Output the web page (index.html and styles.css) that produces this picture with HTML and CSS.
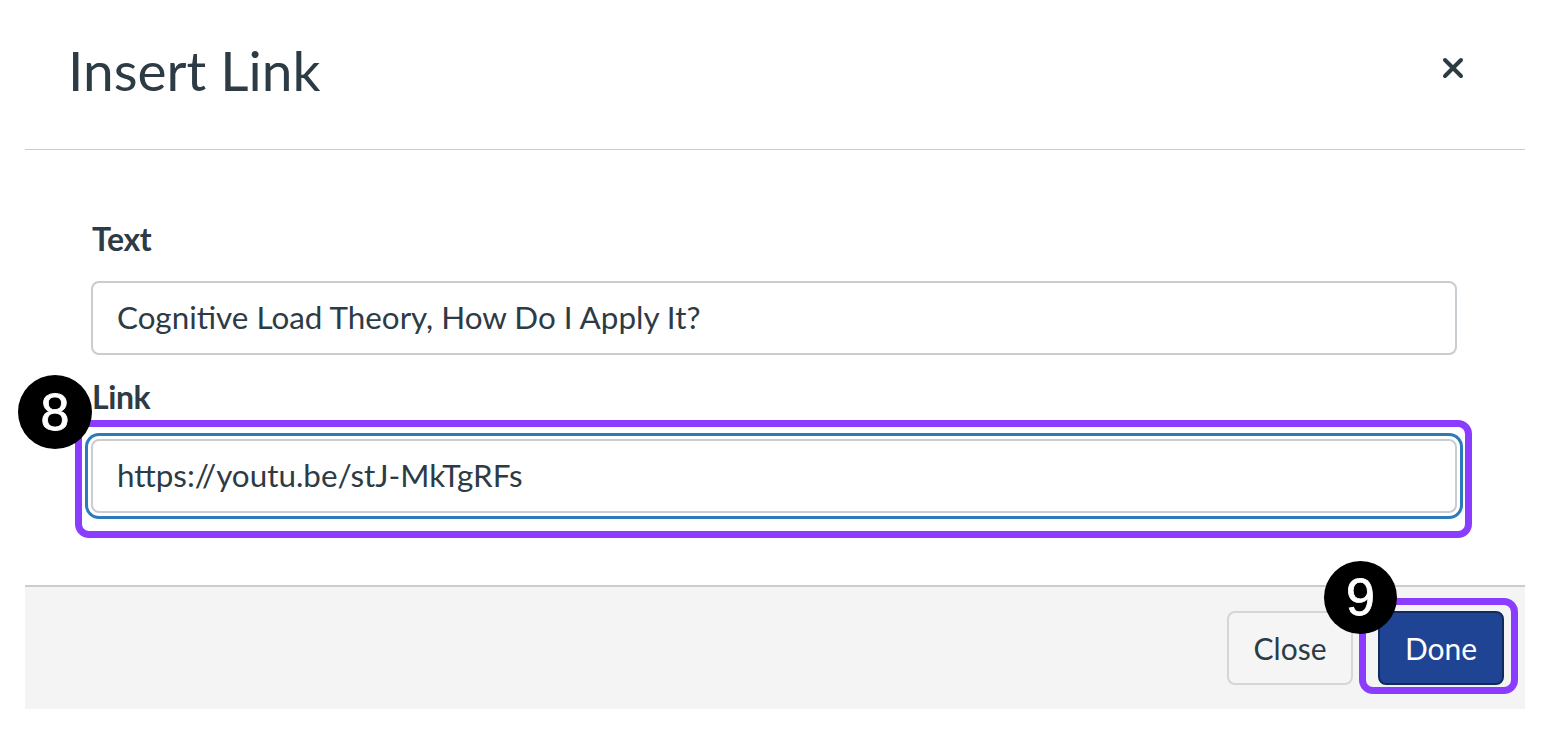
FILE: index.html
```html
<!DOCTYPE html>
<html lang="en">
<head>
<meta charset="utf-8">
<title>Insert Link</title>
<link rel="stylesheet" href="styles.css">
</head>
<body>
<div class="dialog">
  <header class="dialog-header">
    <h1 class="dialog-title">Insert Link</h1>
    <button class="close-x" aria-label="Close">
      <svg width="22" height="22" viewBox="0 0 22 22"><path d="M3 3 L19 19 M19 3 L3 19" stroke="#2d3b45" stroke-width="4" stroke-linecap="round" fill="none"/></svg>
    </button>
  </header>
  <div class="dialog-body">
    <label class="field-label">Text</label>
    <div class="field">
      <div class="text-input">Cognitive Load Theory, How Do I Apply It?</div>
    </div>
    <label class="field-label link-label">Link</label>
    <div class="field field-focus">
      <div class="text-input focused">https://youtu.be/stJ-MkTgRFs</div>
      <span class="highlight highlight-link"></span>
      <span class="badge badge-8">8</span>
    </div>
  </div>
  <footer class="dialog-footer">
    <button class="btn btn-secondary">Close</button>
    <div class="done-wrap">
      <button class="btn btn-primary">Done</button>
      <span class="highlight highlight-done"></span>
      <span class="badge badge-9">9</span>
    </div>
  </footer>
</div>
</body>
</html>
```

FILE: styles.css
```css
* { box-sizing: border-box; }
html, body { margin: 0; padding: 0; background: #ffffff; }
body {
  font-family: Lato, "Open Sans", "Liberation Sans", sans-serif;
  color: #2d3b45;
  height: 731px;
  overflow: hidden;
}
.dialog {
  margin: 0 25px;
  width: 1500px;
}
.dialog-header {
  height: 150px;
  border-bottom: 1px solid #c7cdd1;
  display: flex;
  justify-content: space-between;
  align-items: flex-start;
  padding: 37px 61px 0 43px;
}
.dialog-title {
  margin: 0;
  font-size: 55px;
  font-weight: 400;
  line-height: 67px;
}
.close-x {
  margin-top: 20px;
  width: 22px;
  height: 22px;
  padding: 0;
  border: none;
  background: none;
  display: flex;
}
.dialog-body {
  padding: 70px 68px 72px 66px;
}
.field-label {
  display: block;
  font-size: 32px;
  font-weight: 700;
  line-height: 38px;
  margin: 0 0 23px 1px;
  letter-spacing: -0.4px;
}
.link-label { margin-top: 23px; }
.field { position: relative; }
.text-input {
  height: 74px;
  border: 2px solid #c7cdd1;
  border-radius: 8px;
  background: #fff;
  display: flex;
  align-items: center;
  padding: 0 24px;
  font-size: 31.4px;
  line-height: 1;
}
.text-input.focused {
  box-shadow: 0 0 0 3px #fff, 0 0 0 6px #2b7abc;
}
.highlight {
  position: absolute;
  border: 7px solid #8b3dff;
  border-radius: 14px;
  pointer-events: none;
}
.highlight-link {
  left: -16px;
  right: -15px;
  top: -19px;
  bottom: -25px;
}
.badge {
  position: absolute;
  width: 74px;
  height: 74px;
  border-radius: 50%;
  background: #000;
  color: #fff;
  font-family: "Liberation Sans", Arial, sans-serif;
  font-size: 52px;
  line-height: 74px;
  text-align: center;
  -webkit-text-stroke: 0.8px #fff;
}
.badge-8 {
  left: -73px;
  top: -64px;
}
.dialog-footer {
  height: 124px;
  border-top: 2px solid #c7cdd1;
  background: #f4f4f4;
  display: flex;
  justify-content: flex-end;
  align-items: center;
  gap: 25px;
  padding: 0 21px 0 0;
}
.btn {
  width: 126px;
  height: 74px;
  border-radius: 8px;
  font-family: Lato, "Open Sans", sans-serif;
  font-size: 30px;
  padding: 0;
  display: flex;
  align-items: center;
  justify-content: center;
}
.btn-secondary {
  background: #f5f5f5;
  border: 2px solid #d3d7da;
  color: #2d3b45;
}
.btn-primary {
  background: #1f4494;
  border: 2px solid #102a60;
  color: #ffffff;
}
.done-wrap { position: relative; }
.highlight-done {
  left: -19px;
  right: -14px;
  top: -13px;
  bottom: -9px;
}
.badge-9 {
  width: 73px;
  height: 73px;
  line-height: 73px;
  left: -54px;
  top: -50px;
}
```
